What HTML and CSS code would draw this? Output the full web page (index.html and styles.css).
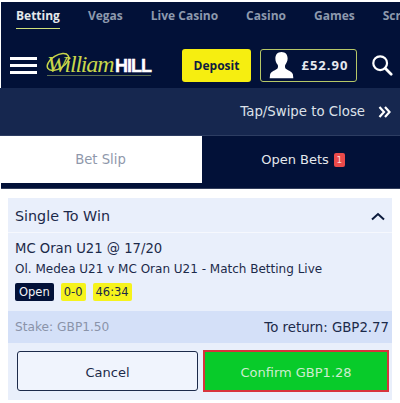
FILE: index.html
```html
<!DOCTYPE html>
<html lang="en">
<head>
    <meta charset="UTF-8">
    <meta name="viewport" content="width=device-width, initial-scale=1.0">
    <title>Bet Slip</title>
    <link rel="stylesheet" href="styles.css">
</head>
<body>
    <div class="top">
        <nav class="tabs">
            <span class="tab active">Betting</span>
            <span class="tab">Vegas</span>
            <span class="tab">Live Casino</span>
            <span class="tab">Casino</span>
            <span class="tab">Games</span>
            <span class="tab">Scratchcards</span>
        </nav>
        <header class="head">
            <div class="burger"><i></i><i></i><i></i></div>
            <div class="logo">
                <svg class="swash" width="30" height="24" viewBox="0 0 30 24"><ellipse cx="13" cy="11" rx="12" ry="6.500" transform="rotate(-32 13 11)" fill="none" stroke="#c8d64a" stroke-width="1.500"/></svg>
                <span class="script">William</span><span class="hill">HILL</span>
            </div>
            <div class="deposit">Deposit</div>
            <div class="balance">
                <svg width="28" height="32" viewBox="0 0 28 32"><path d="M14 1c-4.600 0-7 3.200-7 7.500 0 3 1 5.500 2.600 7.300.6.700.6 3.200-.2 4.200-1.300 1.700-7.400 3.200-8.400 6.500L.5 31h27l-.5-4.500c-1-3.300-7.100-4.800-8.400-6.500-.8-1-.8-3.500-.2-4.200C19.500 14 21 11.500 21 8.500 21 4.200 18.600 1 14 1z" fill="#fff"/></svg>
                <span>£52.90</span>
            </div>
            <svg class="search" width="22" height="22" viewBox="0 0 24 24"><circle cx="10" cy="10" r="7.500" fill="none" stroke="#fff" stroke-width="2.400"/><path d="M15.500 15.500L22 22" stroke="#fff" stroke-width="3" stroke-linecap="round"/></svg>
        </header>
    </div>

    <div class="close-bar">
        <span>Tap/Swipe to Close</span>
        <svg width="13" height="12" viewBox="0 0 13 12"><path d="M1.500 1l4.500 5-4.500 5M7 1l4.500 5L7 11" fill="none" stroke="#fff" stroke-width="2.200"/></svg>
    </div>

    <div class="slip-tabs">
        <div class="slip-tab current">Bet Slip</div>
        <div class="slip-tab">Open Bets <b class="count">1</b></div>
    </div>

    <section class="card">
        <div class="card-head">
            <span>Single To Win</span>
            <svg width="14" height="9" viewBox="0 0 14 9"><path d="M1 7.500L7 2l6 5.500" fill="none" stroke="#0b1a3c" stroke-width="2"/></svg>
        </div>
        <div class="card-body">
            <div class="pick">MC Oran U21 @ 17/20</div>
            <div class="match">Ol. Medea U21 v MC Oran U21 - Match Betting Live</div>
            <div class="badges">
                <span class="open">Open</span>
                <span class="live">0-0</span>
                <span class="live">46:34</span>
            </div>
        </div>
        <div class="stake-row">
            <span class="stake">Stake: GBP1.50</span>
            <span>To return: GBP2.77</span>
        </div>
        <div class="actions">
            <div class="btn cancel">Cancel</div>
            <div class="btn confirm">Confirm GBP1.28</div>
        </div>
    </section>
</body>
</html>
```

FILE: styles.css
```css
html, body { margin: 0; padding: 0; }
body { width: 400px; height: 403px; overflow: hidden; background-color: #fff; font-family: "DejaVu Sans", Verdana, sans-serif; color: #1c2a4a; padding: 2px 0 0 1px; box-sizing: border-box; }

.top { background-color: #021138; height: 86px; }
.tabs { display: flex; gap: 28px; height: 27px; padding: 1px 0 0 15px; box-sizing: border-box; overflow: hidden; white-space: nowrap; font-family: "Open Sans", sans-serif; font-size: 12px; font-weight: 700; color: #8d99ad; }
.tab { height: 25px; line-height: 25px; flex: none; }
.tab.active { color: #e4e8ea; border-bottom: 1px solid #cfe07a; }

.head { display: flex; align-items: center; height: 59px; padding: 13px 0 0 9px; box-sizing: border-box; }
.burger { display: flex; flex-direction: column; gap: 4px; width: 27px; }
.burger i { display: block; height: 3px; background-color: #fff; }
.logo { position: relative; display: flex; align-items: baseline; width: 104px; margin-left: 10px; height: 21px; border-bottom: 1px solid #5d6f52; white-space: nowrap; }
.swash { position: absolute; left: -2px; top: -3px; }
.script { font-family: "Liberation Serif", serif; font-style: italic; font-size: 24px; line-height: 21px; letter-spacing: -1.200px; color: #c8d64a; width: 68px; flex: none; }
.hill { font-family: "Liberation Sans", sans-serif; font-weight: bold; font-size: 18px; line-height: 21px; color: #fff; letter-spacing: -1px; -webkit-text-stroke: 0.4px #fff; }
.deposit { display: flex; align-items: center; justify-content: center; width: 69px; height: 33px; margin-left: 31px; background-color: #f6ee10; border-radius: 3px; font-family: "Open Sans", sans-serif; font-size: 12px; font-weight: 700; color: #0e1d40; }
.balance { display: flex; align-items: center; gap: 7px; box-sizing: border-box; width: 97px; height: 33px; margin-left: 9px; padding-left: 6.500px; border: 1.500px solid #b6c767; border-radius: 3px; font-family: "Open Sans", sans-serif; font-size: 13px; font-weight: 700; letter-spacing: 1px; color: #e6e9ee; }
.balance svg { width: 27px; height: 28px; }
.search { margin-left: 14px; }

.close-bar { display: flex; align-items: center; justify-content: flex-end; gap: 13px; height: 48px; padding-right: 9px; background-color: #16274f; border-bottom: 1px solid #2d3d62; font-size: 13.300px; color: #dde1e9; margin-left: -1px; box-sizing: border-box; }

.slip-tabs { display: flex; height: 53px; background-color: #021138; padding-bottom: 5px; box-sizing: border-box; border-bottom: 1px solid #333f5c; }
.slip-tab { display: flex; align-items: center; justify-content: center; width: 201px; flex: none; font-size: 13.200px; color: #e4e7ec; }
.slip-tab.current { background-color: #fff; color: #8f98ab; padding-right: 2px; box-sizing: border-box; }
.slip-tab + .slip-tab { width: 198px; padding-left: 4px; box-sizing: border-box; font-size: 13px; }
.count { display: inline-block; width: 11px; height: 14px; margin-left: 5px; border-radius: 2px; background-color: #ea4a4a; color: #f7d6d6; font-size: 9px; font-weight: normal; line-height: 14px; text-align: center; }

.card { width: 384px; margin: 9px 0 0 7px; background-color: #e9effb; }
.card-head { display: flex; align-items: center; justify-content: space-between; height: 35px; padding: 2px 7px 0; border-bottom: 1px solid #f6f8fd; box-sizing: border-box; font-size: 14.300px; }
.card-body { padding: 6px 7px 0; height: 78px; box-sizing: border-box; }
.pick { font-size: 13.200px; line-height: 20px; }
.match { font-size: 12px; line-height: 19px; margin-top: 1px; }
.badges { display: flex; gap: 7px; margin-top: 4px; font-size: 11.500px; }
.open { padding: 0 4px; height: 18px; line-height: 18px; background-color: #021138; color: #f0f2f6; border-radius: 2px; }
.live { padding: 0 3px; height: 18px; line-height: 18px; background-color: #f6f31c; border-radius: 2px; }

.stake-row { display: flex; justify-content: space-between; align-items: center; height: 32px; padding: 0 3px 0 7px; background-color: #d4e0f8; font-size: 13.300px; }
.stake { font-size: 12.200px; color: #8a93a9; }

.actions { display: flex; gap: 5px; height: 57px; padding: 8px 3px 8px 9px; box-sizing: border-box; }
.btn { display: flex; align-items: center; justify-content: center; box-sizing: border-box; flex: none; font-size: 13px; padding-top: 2px; }
.cancel { width: 181px; height: 40px; background-color: #f0f4fd; border: 1px solid #1c2a4a; border-radius: 3px; }
.confirm { width: 186px; margin-top: -1px; height: 42px; background-color: #08cb2a; border: 2px solid #d8343c; color: #cdeecf; }
```
